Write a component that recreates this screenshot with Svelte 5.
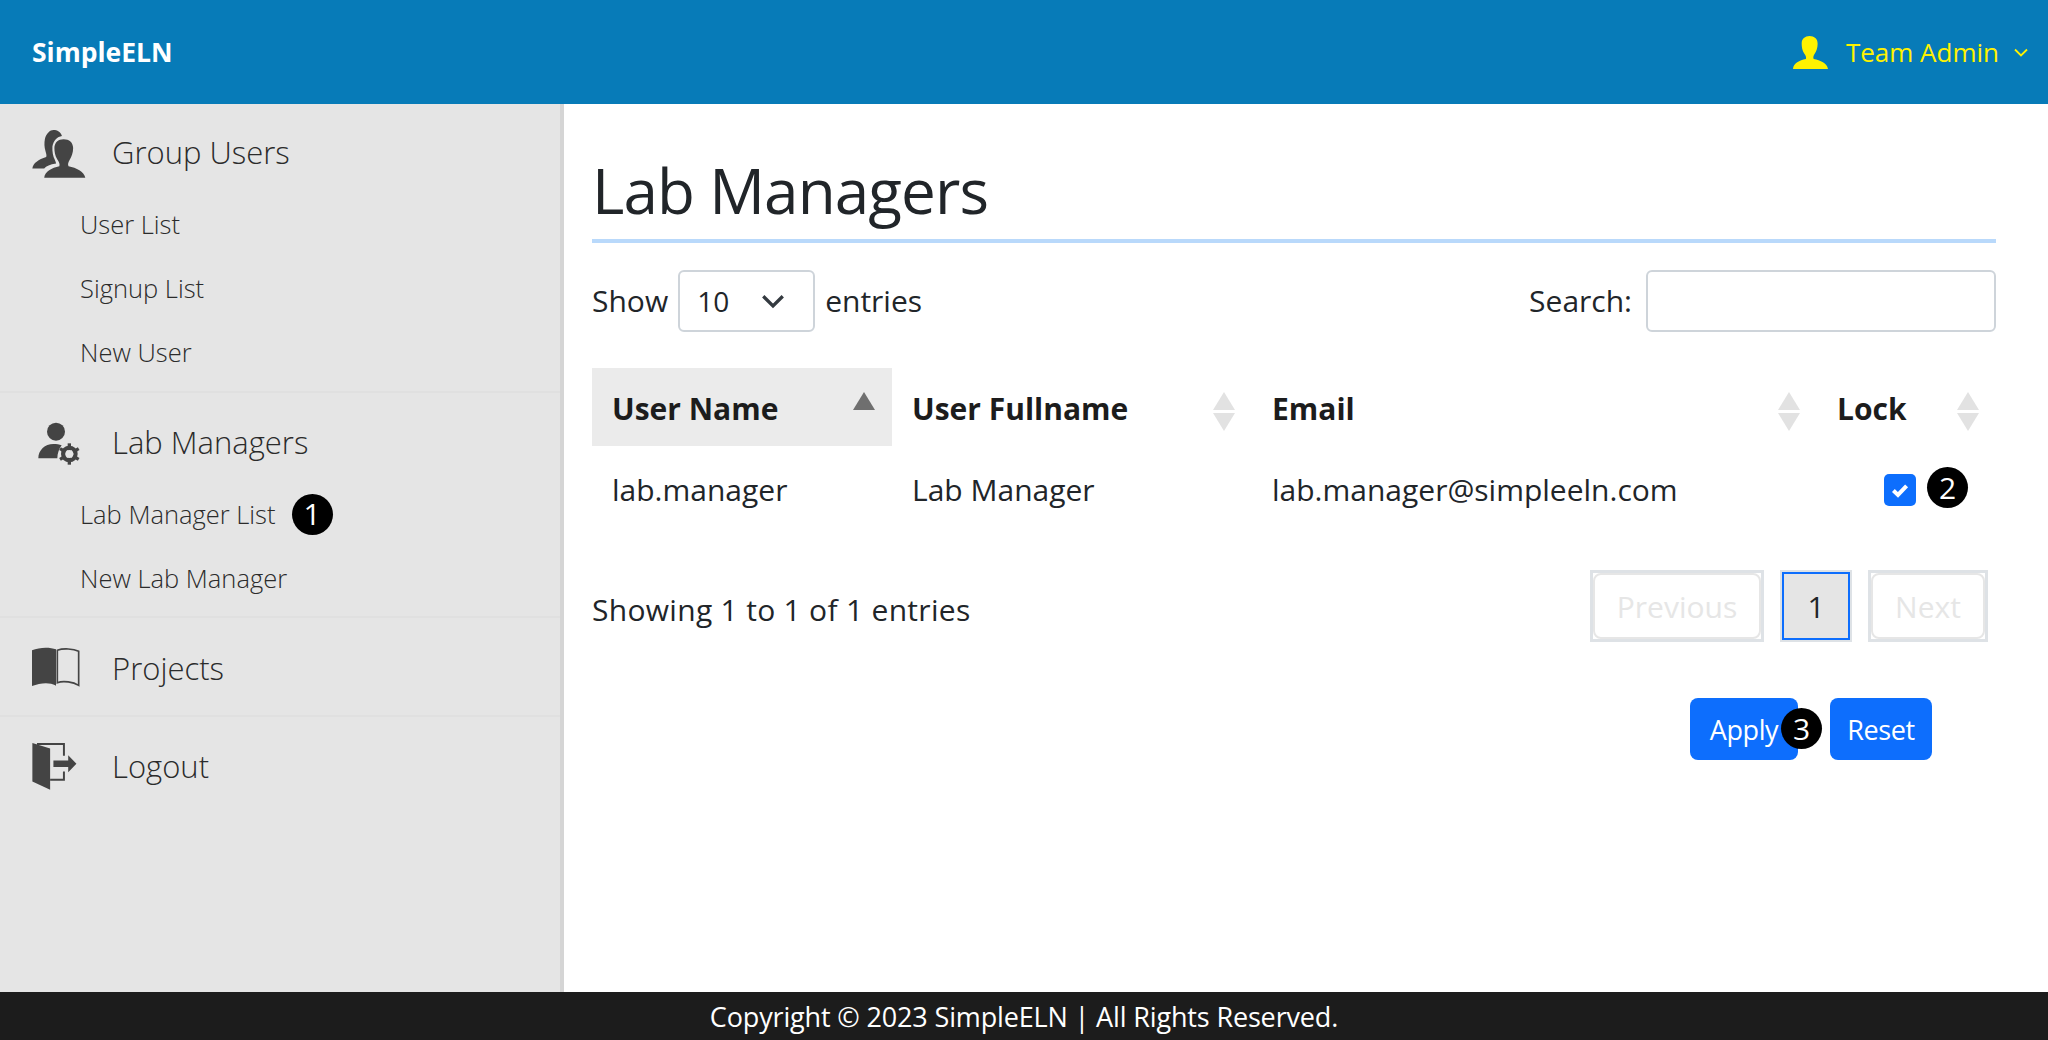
<script>
  const subUsers = ["User List", "Signup List", "New User"];
  const columns = [
    { label: "User Name", width: 300, active: true },
    { label: "User Fullname", width: 360 },
    { label: "Email", width: 565 },
    { label: "Lock", width: 179 }
  ];
</script>

<div class="page">
  <header class="topbar">
    <span class="brand">SimpleELN</span>
    <div class="account">
      <svg class="account-icon" viewBox="72 78 125 117">
        <path d="M72 195C74 175 95 165 118 160C120 155 118 148 112 140C105 130 103 115 103 105C103 88 115 78 131 78C148 78 160 88 160 105C160 120 155 132 150 140C145 148 143 155 146 160C170 165 193 175 197 195Z" />
      </svg>
      <span class="account-name">Team Admin</span>
      <svg class="account-caret" viewBox="0 0 14 9"><path d="M1 1.5l6 6 6-6" /></svg>
    </div>
  </header>

  <div class="body">
    <nav class="sidebar">
      <section class="group">
        <div class="heading first">
          <svg class="icon" viewBox="36 50 162 146">
            <path d="M36 167C38 150 55 140 78 132C80 128 78 122 76 115C72 100 72 90 74 78C78 60 90 50 100 50C112 50 122 56 126 68C112 70 100 82 97 100C96 115 99 130 104 140C106 145 108 150 108 152C90 155 78 160 72 167Z" />
            <path d="M72 195C74 175 95 165 118 160C120 155 118 148 112 140C105 130 103 115 103 105C103 88 115 78 131 78C148 78 160 88 160 105C160 120 155 132 150 140C145 148 143 155 146 160C170 165 193 175 197 195Z" />
          </svg>
          <span>Group Users</span>
        </div>
        {#each subUsers as item}
          <a class="sublink" href="#top">{item}</a>
        {/each}
      </section>

      <section class="group">
        <div class="heading first">
          <svg class="icon" viewBox="36 40 162 138">
            <circle cx="108" cy="75" r="27" />
            <path d="M55 155C55 130 75 112 100 112C110 112 118 113 125 116C118 125 112 140 112 155Z" />
            <circle cx="148" cy="142" r="19" fill="none" stroke="#444" stroke-width="12" />
            <g stroke="#444" stroke-width="10">
              <line x1="148" y1="110" x2="148" y2="174" />
              <line x1="120" y1="126" x2="176" y2="158" />
              <line x1="120" y1="158" x2="176" y2="126" />
            </g>
            <circle cx="148" cy="142" r="12" fill="#e5e5e5" />
          </svg>
          <span>Lab Managers</span>
        </div>
        <a class="sublink" href="#top">Lab Manager List <span class="badge badge-nav">1</span></a>
        <a class="sublink" href="#top">New Lab Manager</a>
      </section>

      <section class="group">
        <div class="heading">
          <svg class="icon" viewBox="36 50 162 130">
            <path d="M36 65C58 55 90 55 108 62V172L106 170C90 160 60 162 36 172Z" />
            <path d="M112 65C130 58 160 60 176 68V170C160 160 130 155 112 162Z" fill="none" stroke="#444" stroke-width="5" />
          </svg>
          <span>Projects</span>
        </div>
      </section>

      <section class="group">
        <div class="heading">
          <svg class="icon" viewBox="36 330 162 146">
            <path d="M36 333L90 350V475L36 450Z" />
            <path d="M50 336H132V372M132 420V445H90" fill="none" stroke="#444" stroke-width="6" />
            <path d="M100 386H145V370L170 396L145 422V406H100Z" />
          </svg>
          <span>Logout</span>
        </div>
      </section>
    </nav>

    <main class="content">
      <h1>Lab Managers</h1>

      <div class="controls">
        <label class="length">
          <span class="lift">Show</span>
          <span class="select">
            <span>10</span>
            <svg viewBox="0 0 16 10"><path d="M1.5 1.5L8 8l6.5-6.5" /></svg>
          </span>
          <span class="lift">entries</span>
        </label>
        <label class="search">
          <span class="lift">Search:</span>
          <input type="text" />
        </label>
      </div>

      <table>
        <thead>
          <tr>
            {#each columns as col}
              <th class:active={col.active} style="width: {col.width}px">
                <div class="th-inner">
                  <span>{col.label}</span>
                  <svg class="sort" viewBox="0 0 22 40">
                    <path class="up" d="M11 0L22 18H0Z" />
                    {#if !col.active}
                      <path class="down" d="M0 21H22L11 39Z" />
                    {/if}
                  </svg>
                </div>
              </th>
            {/each}
          </tr>
        </thead>
        <tbody>
          <tr>
            <td><span class="lift">lab.manager</span></td>
            <td><span class="lift">Lab Manager</span></td>
            <td><span class="lift">lab.manager@simpleeln.com</span></td>
            <td>
              <div class="lock">
                <span class="checkbox">
                  <svg viewBox="0 0 20 20"><path d="M4.5 10.5l3.8 3.6 7.2-7.6" /></svg>
                </span>
                <span class="badge">2</span>
              </div>
            </td>
          </tr>
        </tbody>
      </table>

      <div class="table-foot">
        <span class="info">Showing 1 to 1 of 1 entries</span>
        <div class="pager">
          <span class="page-btn disabled prev"><span>Previous</span></span>
          <span class="page-btn current"><span>1</span></span>
          <span class="page-btn disabled next"><span>Next</span></span>
        </div>
      </div>

      <div class="actions">
        <div class="apply-wrap">
          <button class="apply">Apply</button>
          <span class="badge badge-over">3</span>
        </div>
        <button class="reset">Reset</button>
      </div>
    </main>
  </div>

  <footer class="footer">Copyright © 2023 SimpleELN | All Rights Reserved.</footer>
</div>

<style>
  :global(body) {
    margin: 0;
    font-family: "Open Sans", "Noto Sans", sans-serif;
    color: #212529;
    background: #fff;
  }

  .page {
    display: flex;
    flex-direction: column;
    height: 1040px;
    overflow: hidden;
  }

  .topbar {
    flex: 0 0 104px;
    display: flex;
    align-items: center;
    justify-content: space-between;
    background: #077bb8;
    padding: 0 20px 0 32px;
  }

  .brand {
    color: #fff;
    font-size: 26.5px;
    font-weight: 700;
  }

  .account {
    display: flex;
    align-items: center;
    color: #fff200;
    font-size: 26px;
  }

  .account-icon {
    width: 35px;
    height: 33px;
    fill: #fff200;
    margin-right: 18px;
  }

  .account-caret {
    width: 14px;
    height: 9px;
    margin-left: 15px;
    fill: none;
    stroke: #fff200;
    stroke-width: 1.8;
  }

  .body {
    flex: 1;
    display: flex;
    min-height: 0;
  }

  .sidebar {
    flex: 0 0 560px;
    background: #e5e5e5;
    border-right: 4px solid #d5d5d5;
  }

  .group {
    border-bottom: 2px solid #e0e0e0;
  }

  .group:first-child .sublink:last-child,
  .group:nth-child(2) .sublink:last-child {
    margin-bottom: 6px;
  }

  .group:last-child {
    border-bottom: none;
  }

  .heading {
    display: flex;
    align-items: center;
    height: 97px;
    padding-left: 32px;
    font-size: 31px;
    font-weight: 300;
    color: #2b2b2b;
  }

  .heading.first {
    height: 79px;
    padding-top: 10px;
  }

  .heading span {
    margin-left: 26px;
    position: relative;
    top: 1px;
  }

  .group:first-child .heading span {
    top: -2px;
  }

  .group:nth-child(2) .heading span {
    top: -1px;
  }

  .group:last-child .heading span {
    top: 0;
  }

  .icon {
    width: 54px;
    height: 48px;
    fill: #444;
    flex: none;
  }

  .sublink {
    display: flex;
    align-items: center;
    gap: 16px;
    height: 64px;
    padding-left: 80px;
    font-size: 25.5px;
    font-weight: 300;
    color: #2b2b2b;
    text-decoration: none;
  }

  .group:first-child .sublink {
    position: relative;
    top: -1px;
  }

  .badge {
    display: inline-flex;
    align-items: center;
    justify-content: center;
    width: 41px;
    height: 41px;
    border-radius: 50%;
    background: #000;
    color: #fff;
    font-size: 30px;
    font-weight: 500;
    line-height: 1;
    flex: none;
  }

  .content {
    flex: 1;
    min-width: 0;
    padding: 0 52px 0 28px;
  }

  h1 {
    margin: 44px 0 0;
    height: 91px;
    font-size: 62px;
    line-height: 85px;
    font-weight: 400;
    letter-spacing: -0.9px;
    border-bottom: 4px solid #b9d9fb;
  }

  .lift {
    position: relative;
    top: -1px;
  }

  .controls {
    display: flex;
    justify-content: space-between;
    align-items: center;
    margin-top: 27px;
    height: 62px;
    font-size: 30px;
  }

  .length,
  .search {
    display: flex;
    align-items: center;
  }

  .select {
    display: flex;
    align-items: center;
    justify-content: space-between;
    box-sizing: border-box;
    width: 137px;
    height: 62px;
    margin: 0 10px;
    padding: 0 28px 0 17px;
    border: 2px solid #ced4da;
    border-radius: 6px;
    font-size: 28px;
  }

  .select svg {
    width: 24px;
    height: 15px;
    fill: none;
    stroke: #343a40;
    stroke-width: 2.2;
  }

  .search input {
    box-sizing: border-box;
    width: 350px;
    height: 62px;
    margin-left: 14px;
    border: 2px solid #ced4da;
    border-radius: 6px;
    background: #fff;
  }

  table {
    width: 1404px;
    margin-top: 36px;
    border-collapse: collapse;
    table-layout: fixed;
    font-size: 30px;
  }

  th {
    box-sizing: border-box;
    height: 78px;
    padding: 0 17px 0 20px;
    text-align: left;
    font-weight: 700;
    color: #1c1c1c;
  }

  th span {
    position: relative;
    top: 1px;
  }

  th.active {
    background: #ebebeb;
  }

  .th-inner {
    display: flex;
    align-items: center;
    justify-content: space-between;
  }

  .sort {
    width: 22px;
    height: 40px;
    flex: none;
    position: relative;
    top: 5px;
  }

  .sort .up,
  .sort .down {
    fill: #e2e2e2;
  }

  th.active .sort .up {
    fill: #6f6f6f;
  }

  td {
    box-sizing: border-box;
    height: 88px;
    padding: 0 20px;
    color: #212529;
    white-space: nowrap;
  }

  .lock {
    display: flex;
    align-items: center;
    gap: 11px;
    padding-left: 47px;
  }

  .lock .badge {
    margin-top: -5px;
  }

  .checkbox {
    display: flex;
    align-items: center;
    justify-content: center;
    width: 32px;
    height: 32px;
    border-radius: 5px;
    background: #0d6efd;
  }

  .checkbox svg {
    width: 24px;
    height: 24px;
    fill: none;
    stroke: #fff;
    stroke-width: 3.4;
  }

  .table-foot {
    display: flex;
    justify-content: space-between;
    align-items: center;
    margin-top: 36px;
    padding-right: 8px;
    font-size: 30px;
  }

  .info {
    letter-spacing: 0.3px;
    padding-top: 6px;
  }

  .pager {
    display: flex;
    gap: 16px;
  }

  .page-btn {
    box-sizing: border-box;
    display: block;
    height: 72px;
    border: 2px solid #dee2e6;
    background: #fff;
  }

  .page-btn span {
    box-sizing: border-box;
    display: flex;
    align-items: center;
    justify-content: center;
    height: 100%;
    font-size: 30px;
  }

  .prev {
    width: 174px;
  }

  .current {
    width: 72px;
  }

  .next {
    width: 120px;
  }

  .disabled {
    border-width: 3px;
  }

  .disabled span {
    border: 2px solid #e6e6e6;
    border-radius: 8px;
    color: #e6e6e6;
  }

  .current span {
    border: 2px solid #0d6efd;
    background: #e5e5e5;
    color: #212529;
  }

  .actions {
    display: flex;
    justify-content: flex-end;
    gap: 32px;
    margin-top: 56px;
    padding-right: 64px;
  }

  .apply-wrap {
    position: relative;
  }

  button {
    height: 62px;
    border: none;
    border-radius: 8px;
    background: #0d6efd;
    color: #fff;
    font-family: inherit;
    font-size: 27px;
    letter-spacing: -0.4px;
    padding: 0;
    display: block;
  }

  .apply {
    width: 108px;
  }

  .reset {
    width: 102px;
  }

  .badge-over {
    position: absolute;
    right: -24px;
    top: 10px;
  }

  .footer {
    flex: 0 0 48px;
    display: flex;
    align-items: center;
    justify-content: center;
    background: #1c1c1c;
    color: #fff;
    font-size: 27px;
    letter-spacing: -0.15px;
  }
</style>
